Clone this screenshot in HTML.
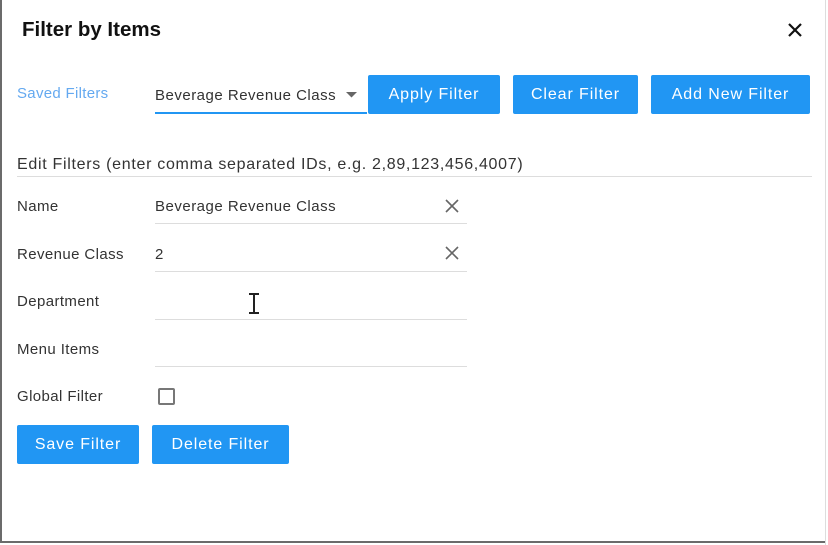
<!DOCTYPE html>
<html><head><style>
html,body{margin:0;padding:0;}
body{width:828px;height:545px;position:relative;background:#fff;font-family:"Liberation Sans",sans-serif;overflow:hidden;}
.frame{position:absolute;left:0;top:0;width:826px;height:543px;border-left:2px solid #6b6b6b;border-bottom:2px solid #6b6b6b;box-sizing:border-box;}
.rb{position:absolute;left:825px;top:0;width:1px;height:545px;background:#ddd;}
.t{position:absolute;white-space:nowrap;}
.btn{position:absolute;background:#2196f3;color:#fff;font-size:16px;letter-spacing:0.9px;text-align:center;line-height:39px;height:39px;border-radius:2px;}
.lbl{position:absolute;left:17px;font-size:15px;letter-spacing:0.4px;color:#333;}
.v{font-size:15px;letter-spacing:0.5px;color:#333;}
.ul{position:absolute;left:155px;width:312px;height:1px;background:#ddd;}
.x{position:absolute;left:445px;width:14px;height:14px;}
</style></head><body>
<div class="frame"></div><div class="rb"></div>
<div class="t" style="left:22px;top:18px;font-size:20.5px;font-weight:bold;color:#111;">Filter by Items</div>
<svg style="position:absolute;left:787px;top:22px" width="16" height="16" viewBox="0 0 16 16"><path d="M2 2L14 14M14 2L2 14" stroke="#111" stroke-width="2.2"/></svg>
<div class="t" style="left:17px;top:85px;font-size:15px;letter-spacing:0.3px;color:#64a9f0;">Saved Filters</div>
<div class="t v" style="left:155px;top:87px;">Beverage Revenue Class</div>
<svg style="position:absolute;left:346px;top:92px" width="12" height="6"><path d="M0 0H11L5.5 5.5Z" fill="#666"/></svg>
<div style="position:absolute;left:155px;top:112px;width:212px;height:2px;background:#2196f3;"></div>
<div class="btn" style="left:368px;top:75px;width:132px;">Apply Filter</div>
<div class="btn" style="left:513px;top:75px;width:125px;">Clear Filter</div>
<div class="btn" style="left:651px;top:75px;width:159px;">Add New Filter</div>
<div class="t" style="left:17px;top:156px;font-size:16px;letter-spacing:0.7px;color:#333;">Edit Filters (enter comma separated IDs, e.g. 2,89,123,456,4007)</div>
<div style="position:absolute;left:17px;top:176px;width:795px;height:1px;background:#ddd;"></div>
<div class="lbl" style="top:198px;">Name</div>
<div class="t v" style="left:155px;top:198px;">Beverage Revenue Class</div>
<svg class="x" style="top:199px" viewBox="0 0 14 14"><path d="M1 1L13 13M13 1L1 13" stroke="#666" stroke-width="1.6"/></svg>
<div class="ul" style="top:223px;"></div>
<div class="lbl" style="top:246px;">Revenue Class</div>
<div class="t v" style="left:155px;top:246px;">2</div>
<svg class="x" style="top:246px" viewBox="0 0 14 14"><path d="M1 1L13 13M13 1L1 13" stroke="#666" stroke-width="1.6"/></svg>
<div class="ul" style="top:271px;"></div>
<div class="lbl" style="top:293px;">Department</div>
<svg style="position:absolute;left:247px;top:293px" width="14" height="21"><path d="M2 1H12M7 1V20M2 20H12" stroke="#222" stroke-width="2"/></svg>
<div class="ul" style="top:319px;"></div>
<div class="lbl" style="top:341px;">Menu Items</div>
<div class="ul" style="top:366px;"></div>
<div class="lbl" style="top:388px;">Global Filter</div>
<div style="position:absolute;left:158px;top:388px;width:13px;height:13px;border:2px solid #777;border-radius:2px;"></div>
<div class="btn" style="left:17px;top:425px;width:122px;">Save Filter</div>
<div class="btn" style="left:152px;top:425px;width:137px;">Delete Filter</div>
</body></html>
